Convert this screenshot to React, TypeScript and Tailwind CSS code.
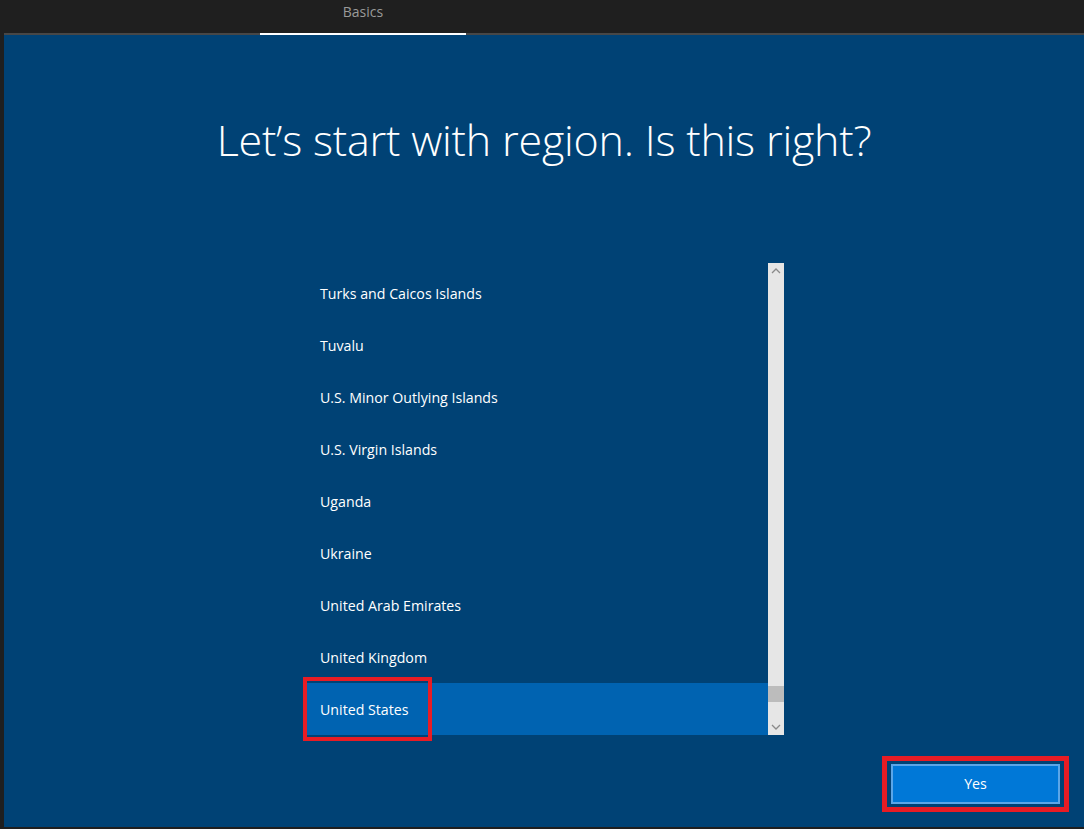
import React from "react";

const regions = [
  "Turks and Caicos Islands",
  "Tuvalu",
  "U.S. Minor Outlying Islands",
  "U.S. Virgin Islands",
  "Uganda",
  "Ukraine",
  "United Arab Emirates",
  "United Kingdom",
  "United States",
];

export default function App() {
  const selected = "United States";
  return (
    <div className="flex h-[829px] w-[1084px] flex-col overflow-hidden bg-[#1f1f1f] font-['Open_Sans','Noto_Sans',sans-serif]">
      {/* tab strip */}
      <div className="flex h-[33px] shrink-0">
        <div className="w-[260px]" />
        <div className="flex w-[206px] items-start justify-center pt-[1px] text-[14px] text-[#9a9a9a]">Basics</div>
      </div>
      <div className="flex h-[2px] shrink-0 pl-[4px]">
        <div className="w-[256px] bg-[#474747]" />
        <div className="w-[206px] bg-white" />
        <div className="flex-1 bg-[#474747]" />
      </div>

      <main className="relative mb-[2px] ml-[4px] flex flex-1 flex-col bg-[#004275]">
        <h1 className="mt-[77px] text-center text-[43px] font-light leading-[56px] tracking-[-0.2px] text-white">
          Let’s start with region. Is this right?
        </h1>

        <div className="mx-auto mt-[95px] flex h-[472px] w-[480px]">
          <ul className="flex flex-1 flex-col pt-[4px]">
            {regions.map((r) => (
              <li
                key={r}
                className={`relative flex h-[52px] shrink-0 items-center pl-[16px] pt-[2px] text-[14.2px] text-white ${
                  r === selected ? "bg-[#0063b1]" : ""
                }`}
              >
                {r}
                {r === selected && (
                  <span className="pointer-events-none absolute left-[-1px] top-[-6px] h-[64px] w-[129px] border-[4px] border-[#e81c24]" />
                )}
              </li>
            ))}
          </ul>
          <div className="flex w-[16px] flex-col items-center bg-[#e6e6e6]">
            <svg width="10" height="6" viewBox="0 0 10 6" className="mt-[5px]">
              <path d="M1 5 L5 1 L9 5" stroke="#8a8a8a" strokeWidth="1.3" fill="none" />
            </svg>
            <div className="flex-1" />
            <div className="h-[16px] w-full bg-[#bcbcbc]" />
            <div className="h-[22px]" />
            <svg width="10" height="6" viewBox="0 0 10 6" className="mb-[5px]">
              <path d="M1 1 L5 5 L9 1" stroke="#8a8a8a" strokeWidth="1.3" fill="none" />
            </svg>
          </div>
        </div>

        <div className="mt-auto flex justify-end pb-[15px] pr-[15px]">
          <div className="border-[5px] border-[#e81c24] px-[4px] py-[3px]">
            <button className="flex h-[40px] w-[169px] items-center justify-center border-2 border-[#5aa6e8] bg-[#0078d7] text-[14.2px] text-white">
              Yes
            </button>
          </div>
        </div>
      </main>
    </div>
  );
}
